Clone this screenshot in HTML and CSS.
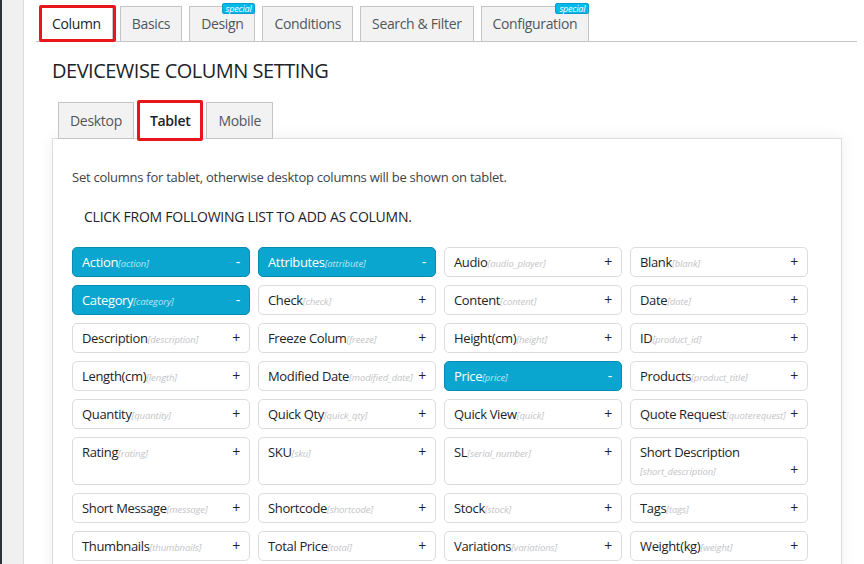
FILE: index.html
```html
<!DOCTYPE html>
<html lang="en">
<head>
<meta charset="utf-8">
<title>Column settings</title>
<link rel="stylesheet" href="styles.css">
</head>
<body>
<div class="admin">
  <div class="menu-edge"></div>
  <div class="gutter"></div>
  <main class="main">
    <nav class="tabs">
      <a class="tab active marked">Column</a>
      <a class="tab">Basics</a>
      <a class="tab">Design<span class="badge">special</span></a>
      <a class="tab">Conditions</a>
      <a class="tab">Search &amp; Filter</a>
      <a class="tab">Configuration<span class="badge">special</span></a>
    </nav>

    <h2 class="title">DEVICEWISE COLUMN SETTING</h2>

    <div class="subtabs">
      <a class="subtab">Desktop</a>
      <a class="subtab active marked">Tablet</a>
      <a class="subtab">Mobile</a>
    </div>

    <section class="panel">
      <p class="hint">Set columns for tablet, otherwise desktop columns will be shown on tablet.</p>
      <h3 class="list-title">CLICK FROM FOLLOWING LIST TO ADD AS COLUMN.</h3>
      <ul class="cols">
        <li class="col on"><span class="name">Action</span><span class="key">[action]</span><span class="act">-</span></li>
        <li class="col on"><span class="name">Attributes</span><span class="key">[attribute]</span><span class="act">-</span></li>
        <li class="col"><span class="name">Audio</span><span class="key">[audio_player]</span><span class="act">+</span></li>
        <li class="col"><span class="name">Blank</span><span class="key">[blank]</span><span class="act">+</span></li>

        <li class="col on"><span class="name">Category</span><span class="key">[category]</span><span class="act">-</span></li>
        <li class="col"><span class="name">Check</span><span class="key">[check]</span><span class="act">+</span></li>
        <li class="col"><span class="name">Content</span><span class="key">[content]</span><span class="act">+</span></li>
        <li class="col"><span class="name">Date</span><span class="key">[date]</span><span class="act">+</span></li>

        <li class="col"><span class="name">Description</span><span class="key">[description]</span><span class="act">+</span></li>
        <li class="col"><span class="name">Freeze Colum</span><span class="key">[freeze]</span><span class="act">+</span></li>
        <li class="col"><span class="name">Height(cm)</span><span class="key">[height]</span><span class="act">+</span></li>
        <li class="col"><span class="name">ID</span><span class="key">[product_id]</span><span class="act">+</span></li>

        <li class="col"><span class="name">Length(cm)</span><span class="key">[length]</span><span class="act">+</span></li>
        <li class="col"><span class="name">Modified Date</span><span class="key">[modified_date]</span><span class="act">+</span></li>
        <li class="col on"><span class="name">Price</span><span class="key">[price]</span><span class="act">-</span></li>
        <li class="col"><span class="name">Products</span><span class="key">[product_title]</span><span class="act">+</span></li>

        <li class="col"><span class="name">Quantity</span><span class="key">[quantity]</span><span class="act">+</span></li>
        <li class="col"><span class="name">Quick Qty</span><span class="key">[quick_qty]</span><span class="act">+</span></li>
        <li class="col"><span class="name">Quick View</span><span class="key">[quick]</span><span class="act">+</span></li>
        <li class="col"><span class="name">Quote Request</span><span class="key">[quoterequest]</span><span class="act">+</span></li>

        <li class="col"><span class="name">Rating</span><span class="key">[rating]</span><span class="act">+</span></li>
        <li class="col"><span class="name">SKU</span><span class="key">[sku]</span><span class="act">+</span></li>
        <li class="col"><span class="name">SL</span><span class="key">[serial_number]</span><span class="act">+</span></li>
        <li class="col"><span class="name">Short Description</span><span class="key">[short_description]</span><span class="act">+</span></li>

        <li class="col"><span class="name">Short Message</span><span class="key">[message]</span><span class="act">+</span></li>
        <li class="col"><span class="name">Shortcode</span><span class="key">[shortcode]</span><span class="act">+</span></li>
        <li class="col"><span class="name">Stock</span><span class="key">[stock]</span><span class="act">+</span></li>
        <li class="col"><span class="name">Tags</span><span class="key">[tags]</span><span class="act">+</span></li>

        <li class="col"><span class="name">Thumbnails</span><span class="key">[thumbnails]</span><span class="act">+</span></li>
        <li class="col"><span class="name">Total Price</span><span class="key">[total]</span><span class="act">+</span></li>
        <li class="col"><span class="name">Variations</span><span class="key">[variations]</span><span class="act">+</span></li>
        <li class="col"><span class="name">Weight(kg)</span><span class="key">[weight]</span><span class="act">+</span></li>
      </ul>
    </section>
  </main>
</div>
</body>
</html>
```

FILE: styles.css
```css
* { box-sizing: border-box; }

html, body {
  margin: 0;
  padding: 0;
  height: 100%;
  overflow: hidden;
  background: #fff;
}

body {
  font-family: "Open Sans", "Noto Sans", sans-serif;
  color: #1d2327;
}

.admin {
  display: flex;
  min-height: 100%;
}

.menu-edge {
  width: 2px;
  flex: none;
  background: #2c3338;
}

.gutter {
  width: 22px;
  flex: none;
  background: #f0f0f1;
  border-right: 1px solid #dcdcde;
}

.main {
  flex: 1;
  min-width: 0;
  padding: 0 7px 0 12px;
}

/* main tabs */
.tabs {
  display: flex;
  gap: 7px;
  padding: 6px 0 0 4px;
  border-bottom: 1px solid #c3c4c7;
}

.tab {
  position: relative;
  height: 36px;
  margin-bottom: -1px;
  padding: 0 11px;
  border: 1px solid #c3c4c7;
  background: #f2f2f2;
  color: #50575e;
  font-size: 14px;
  letter-spacing: -0.35px;
  line-height: 34px;
  white-space: nowrap;
}

.tab.active {
  background: #fff;
  border-bottom-color: #fff;
  color: #1d2327;
}

.tab.marked::after {
  content: "";
  position: absolute;
  left: -2px;
  right: -4px;
  top: -2px;
  bottom: -1px;
  border: 3px solid #e8151b;
  border-radius: 2px;
}

.badge {
  position: absolute;
  top: -4px;
  right: -1px;
  height: 11px;
  padding: 0 3px;
  background: #00b9eb;
  border: 1px solid #0a9ccf;
  border-radius: 2px;
  color: #fff;
  font-size: 9px;
  font-style: italic;
  letter-spacing: -0.2px;
  line-height: 9px;
}

/* heading */
.title {
  margin: 15px 0 0 16px;
  font-size: 20px;
  font-weight: 400;
  letter-spacing: -0.5px;
  line-height: 28px;
  color: #1d2327;
}

/* device tabs */
.subtabs {
  display: flex;
  gap: 4px;
  margin: 17px 0 0 22px;
}

.subtab {
  position: relative;
  height: 37px;
  margin-bottom: -1px;
  padding: 0 11px;
  border: 1px solid #c3c4c7;
  background: #f2f2f2;
  color: #50575e;
  font-size: 14px;
  letter-spacing: -0.3px;
  line-height: 35px;
  z-index: 1;
}

.subtab.active {
  background: #fff;
  border-bottom-color: #fff;
  color: #1d2327;
  font-weight: 600;
}

.subtab.marked::after {
  content: "";
  position: absolute;
  left: -2px;
  right: -2px;
  top: -3px;
  bottom: -3px;
  border: 3px solid #e8151b;
  border-radius: 2px;
}

/* panel */
.panel {
  width: 790px;
  margin-left: 16px;
  padding: 28px 19px 40px;
  background: #fff;
  border: 1px solid #dcdcde;
  box-shadow: 0 0 14px rgba(0, 0, 0, 0.07);
}

.hint {
  margin: 0;
  font-size: 13px;
  letter-spacing: -0.25px;
  line-height: 20px;
  color: #3c434a;
}

.list-title {
  margin: 20px 0 0 12px;
  font-size: 14px;
  font-weight: 400;
  letter-spacing: -0.25px;
  line-height: 20px;
  color: #1d2327;
}

.cols {
  list-style: none;
  margin: 20px 0 0;
  padding: 0;
  display: grid;
  grid-template-columns: repeat(4, 178px);
  gap: 8px;
}

.col {
  min-height: 30px;
  padding: 5px 9px;
  border: 1px solid #dcdcde;
  border-radius: 5px;
  background: #fff;
  font-size: 13px;
  letter-spacing: -0.35px;
  line-height: 18px;
  color: #1d2327;
}

.col .key {
  display: inline-block;
  font-size: 9.5px;
  font-style: italic;
  letter-spacing: -0.1px;
  line-height: 10px;
  color: #c3c4c7;
}

.col .act {
  float: right;
  font-size: 14px;
  line-height: 18px;
  color: #1d2327;
}

.col.on {
  background: #0aa6cf;
  border-color: #0a8cb0;
  color: #fff;
}

.col.on .key {
  color: #b9e6f3;
}

.col.on .act {
  color: #fff;
}
```
